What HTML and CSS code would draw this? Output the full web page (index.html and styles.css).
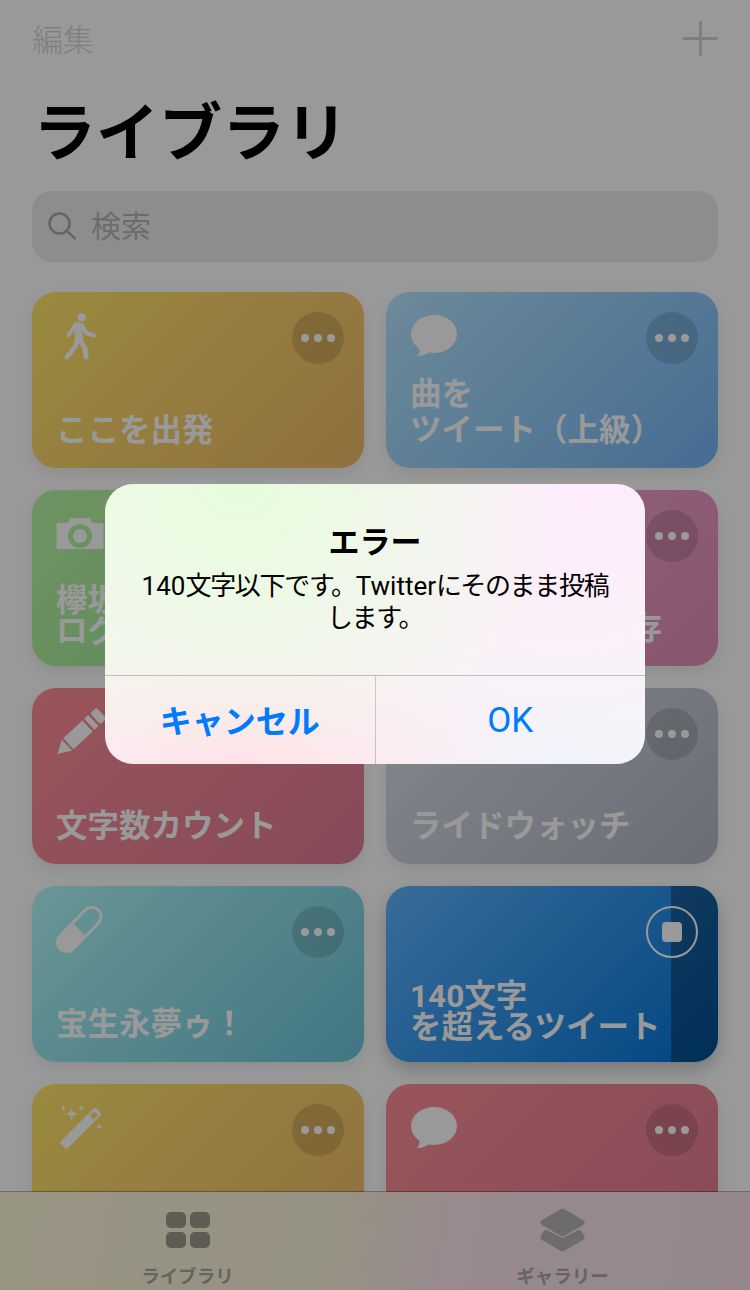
FILE: index.html
```html
<!DOCTYPE html>
<html lang="ja">
<head>
<meta charset="utf-8">
<title>ライブラリ</title>
<link rel="stylesheet" href="styles.css">
</head>
<body>
<div class="screen">
  <header class="topbar">
    <span class="edit">編集</span>
    <svg class="plus" viewBox="0 0 36 36"><path d="M18 0V36M0 18H36"/></svg>
  </header>
  <h1 class="title">ライブラリ</h1>
  <div class="search">
    <svg class="search-icon" viewBox="0 0 30 30"><circle cx="11.500" cy="11.500" r="10"/><path d="M18.800 18.800L27.500 27"/></svg>
    <span>検索</span>
  </div>
  <main class="grid">
    <article class="card yellow">
      <div class="card-top">
        <svg class="icon" viewBox="0 0 48 48"><circle class="f" cx="25.7" cy="5.3" r="4.2"/><path class="s" stroke-width="8" d="M22 14L23 26"/><path class="s" stroke-width="4" d="M20 12L12.5 23M26 13L30 21L38 23.5"/><path class="s" stroke-width="5" d="M21 29L19 35L11 45M24 28L29 36L30 45"/></svg>
        <span class="more"><i></i><i></i><i></i></span>
      </div>
      <p class="name">ここを出発</p>
    </article>
    <article class="card blue">
      <div class="card-top">
        <svg class="icon" viewBox="0 0 48 48"><ellipse class="f" cx="24" cy="22" rx="23" ry="19"/><path class="f" d="M10 33C10 38 9 42 7 44C12 44 17 42 21 39Z"/></svg>
        <span class="more"><i></i><i></i><i></i></span>
      </div>
      <p class="name">曲を<br>ツイート（上級）</p>
    </article>
    <article class="card green">
      <div class="card-top">
        <svg class="icon" viewBox="0 0 48 48"><path class="f" fill-rule="evenodd" d="M14 8H34L36 13H46Q47.5 13 47.5 14.500V37.500Q47.5 39 46 39H2Q.5 39 .5 37.500V14.500Q.5 13 2 13H12ZM24 14A12 12 0 1 0 24 38A12 12 0 1 0 24 14Z"/><circle class="f" cx="24" cy="26" r="7"/></svg>
        <span class="more"><i></i><i></i><i></i></span>
      </div>
      <p class="name tight">欅坂46<br>ログ</p>
    </article>
    <article class="card pink">
      <div class="card-top">
        <svg class="icon" viewBox="0 0 48 48"><ellipse class="f" cx="24" cy="22" rx="23" ry="19"/></svg>
        <span class="more"><i></i><i></i><i></i></span>
      </div>
      <p class="name">記事をメモに保存</p>
    </article>
    <article class="card red">
      <div class="card-top">
        <svg class="icon" viewBox="0 0 48 48"><g class="f" transform="translate(1.500 46) rotate(-43)"><path d="M0 0L13 -7.500V7.500Z"/><rect x="15" y="-7.500" width="26" height="15"/><rect x="43.500" y="-7.500" width="5.500" height="15"/><rect x="51.500" y="-7.500" width="8.500" height="15" rx="2"/></g></svg>
        <span class="more"><i></i><i></i><i></i></span>
      </div>
      <p class="name">文字数カウント</p>
    </article>
    <article class="card gray">
      <div class="card-top">
        <svg class="icon" viewBox="0 0 48 48"></svg>
        <span class="more"><i></i><i></i><i></i></span>
      </div>
      <p class="name">ライドウォッチ</p>
    </article>
    <article class="card teal">
      <div class="card-top">
        <svg class="icon" viewBox="0 0 48 48"><g transform="translate(23.200 23.500) rotate(-45.700)"><path class="f" d="M0 -10.700H-17.900A10.700 10.700 0 0 0 -17.900 10.700H0Z"/><path class="o" d="M0 -9.300H17.900A9.300 9.300 0 0 1 17.900 9.300H0"/></g></svg>
        <span class="more"><i></i><i></i><i></i></span>
      </div>
      <p class="name">宝生永夢ゥ！</p>
    </article>
    <article class="card deep">
      <span class="progress"></span>
      <div class="card-top">
        <svg class="icon" viewBox="0 0 48 48"></svg>
        <span class="stop"><b></b></span>
      </div>
      <p class="name tight">140文字<br>を超えるツイート</p>
    </article>
    <article class="card yellow">
      <div class="card-top">
        <svg class="icon" viewBox="0 0 48 48"><path class="f" fill-rule="evenodd" d="M37.500 4.500Q39 3.500 40.500 4.500L44.500 8.500Q45.500 10 44.500 11.500L12 44Q10.500 45 9 44L5 40Q4 38.500 5 37ZM38.500 7.500L34 12L37.500 15.500L42 11Z"/><path class="f" d="M15.700 2.500Q15.700 10 23.200 10Q15.700 10 15.700 17.500Q15.700 10 8.200 10Q15.700 10 15.700 2.500ZM7.300 .3Q7.300 4.300 11.300 4.300Q7.300 4.300 7.300 8.300Q7.300 4.300 3.300 4.300Q7.300 4.300 7.300 .3ZM25.300 .3Q25.300 4.300 29.300 4.300Q25.300 4.300 25.300 8.300Q25.300 4.300 21.300 4.300Q25.300 4.300 25.300 .3ZM43.300 18.700Q43.300 22.700 47.300 22.700Q43.300 22.700 43.300 26.700Q43.300 22.700 39.300 22.700Q43.300 22.700 43.300 18.700Z"/></svg>
        <span class="more"><i></i><i></i><i></i></span>
      </div>
    </article>
    <article class="card red">
      <div class="card-top">
        <svg class="icon" viewBox="0 0 48 48"><ellipse class="f" cx="24" cy="22" rx="23" ry="19"/><path class="f" d="M10 33C10 38 9 42 7 44C12 44 17 42 21 39Z"/></svg>
        <span class="more"><i></i><i></i><i></i></span>
      </div>
    </article>
  </main>
  <nav class="tabbar">
    <div class="tab">
      <span class="tab-grid"><i></i><i></i><i></i><i></i></span>
      <span class="tab-label">ライブラリ</span>
    </div>
    <div class="tab">
      <svg class="tab-layers" viewBox="0 0 45 44"><path d="M22.500 3.500L41.500 14.500L22.500 25.500L3.500 14.500Z"/><path d="M6 25L22.500 33.500L39 25L41.500 29.500L22.500 40.500L3.500 29.500Z"/></svg>
      <span class="tab-label">ギャラリー</span>
    </div>
  </nav>
  <div class="dim">
    <section class="alert">
      <div class="alert-body">
        <h2 class="alert-title">エラー</h2>
        <p class="alert-text"><span class="latin">140</span>文字以下です。<span class="latin">Twitter</span>にそのまま投稿します。</p>
      </div>
      <div class="alert-actions">
        <span class="action strong">キャンセル</span>
        <span class="action">OK</span>
      </div>
    </section>
  </div>
</div>
</body>
</html>
```
FILE: styles.css
```css
* { box-sizing: border-box; }
html, body { margin: 0; padding: 0; }
body {
  font-family: Roboto, "Noto Sans CJK JP", "Liberation Sans", sans-serif;
  background: #fff;
}
.screen {
  position: relative;
  width: 750px;
  height: 1290px;
  overflow: hidden;
  background: #fff;
  padding: 0 32px;
}
.topbar {
  height: 80px;
  display: flex;
  justify-content: space-between;
  align-items: flex-start;
}
.edit {
  margin-top: 18px;
  font-size: 31px;
  line-height: 46px;
  font-weight: 300;
  color: #d4d4d4;
}
.plus { width: 35px; height: 35px; margin-top: 21px; }
.plus path { stroke: #d4d4d4; stroke-width: 3; fill: none; }
.title {
  margin: 0 0 0 1px;
  height: 111px;
  font-size: 63px;
  line-height: 108px;
  font-weight: 700;
  color: #000;
}
.search {
  height: 71px;
  border-radius: 20px;
  background: #ececec;
  display: flex;
  align-items: center;
  padding-left: 16px;
  gap: 13px;
  font-size: 30px;
  color: #b4b4b4;
}
.search-icon { width: 30px; height: 30px; }
.search-icon circle, .search-icon path { fill: none; stroke: #a8a8a8; stroke-width: 2.500; }
.search span { margin-top: -6px; }
.grid {
  margin-top: 30px;
  display: grid;
  grid-template-columns: 332px 332px;
  grid-auto-rows: 176px;
  gap: 22px;
}
.card {
  position: relative;
  overflow: hidden;
  border-radius: 24px;
  padding: 20px 20px 19px 24px;
  display: flex;
  flex-direction: column;
  justify-content: space-between;
  box-shadow: 0 6px 16px rgba(0, 0, 0, .08);
}
.card-top { display: flex; justify-content: space-between; align-items: flex-start; position: relative; }
.icon { width: 48px; height: 48px; overflow: visible; }
.f { fill: #fff; }
.s { fill: none; stroke: #fff; stroke-linecap: round; stroke-linejoin: round; }
.o { fill: none; stroke: #fff; stroke-width: 2.800; }
.more {
  width: 52px;
  height: 52px;
  border-radius: 50%;
  background: rgba(0, 0, 0, .13);
  display: flex;
  align-items: center;
  justify-content: center;
  gap: 5px;
}
.more i { width: 8px; height: 8px; border-radius: 50%; background: #fff; }
.name {
  margin: 0;
  position: relative;
  font-size: 31.500px;
  line-height: 36px;
  font-weight: 700;
  color: #fff;
  white-space: nowrap;
}
.name.tight { line-height: 31px; }
.yellow { background: linear-gradient(135deg, #ffe669, #f0b969); }
.blue { background: linear-gradient(135deg, #b6e6ff, #74b6f5); }
.green { background: linear-gradient(135deg, #b9f7a7, #9be08f); }
.pink { background: linear-gradient(135deg, #f8a8d8, #e38eb8); }
.red { background: linear-gradient(135deg, #ff8e98, #e07c93); }
.gray { background: linear-gradient(135deg, #dbe0ea, #b2b7c5); }
.teal { background: linear-gradient(135deg, #b0fafa, #6cc5d9); }
.deep { background: linear-gradient(135deg, #61b4ff, #0075d9); box-shadow: 0 8px 18px rgba(0, 0, 0, .22); }
.progress {
  position: absolute;
  top: 0;
  right: 0;
  bottom: 0;
  width: 47px;
  background: rgba(0, 0, 0, .32);
}
.stop {
  width: 52px;
  height: 52px;
  border-radius: 50%;
  border: 2px solid #fff;
  display: flex;
  align-items: center;
  justify-content: center;
}
.stop b { width: 20px; height: 20px; border-radius: 4px; background: #fff; }
.tabbar {
  position: absolute;
  left: 0;
  right: 0;
  bottom: 0;
  height: 99px;
  display: flex;
  border-top: 1px solid rgba(0, 0, 0, .3);
  background: linear-gradient(100deg, #fdf7d9 0%, #fbf3da 45%, #fde6ec 60%, #f8e2ea 100%);
  background-clip: padding-box;
}
.tab {
  flex: 1;
  display: flex;
  flex-direction: column;
  align-items: center;
  padding-top: 16px;
  height: 100%;
}
.tab-grid {
  margin-top: 4px;
  width: 44px;
  height: 36px;
  display: grid;
  grid-template-columns: 20px 20px;
  grid-template-rows: 16px 16px;
  gap: 4px;
}
.tab-grid i { border-radius: 5px; background: #9e9a8d; }
.tab-layers { width: 45px; height: 44px; }
.tab-layers path { fill: #b8b3b3; stroke: #b8b3b3; stroke-width: 6; stroke-linejoin: round; }
.tab-label {
  position: absolute;
  bottom: 1px;
  font-size: 18.500px;
  line-height: 24px;
  font-weight: 700;
  color: #aaa7a0;
}
.dim {
  position: absolute;
  inset: 0;
  background: rgba(0, 0, 0, .4);
  display: flex;
  align-items: flex-start;
  justify-content: center;
  padding-top: 484px;
}
.alert {
  width: 540px;
  height: 280px;
  border-radius: 28px;
  overflow: hidden;
  display: flex;
  flex-direction: column;
  background:
    radial-gradient(ellipse 340px 280px at 25% 0%, #e6fcdc 0%, rgba(230, 252, 220, 0) 100%),
    radial-gradient(ellipse 340px 280px at 85% 5%, #feebfd 0%, rgba(254, 235, 253, 0) 100%),
    radial-gradient(ellipse 300px 140px at 25% 100%, #ffe2ea 0%, rgba(255, 226, 234, 0) 100%),
    radial-gradient(ellipse 300px 140px at 85% 100%, #f1f4fb 0%, rgba(241, 244, 251, 0) 100%),
    #f8f6f4;
}
.alert-body {
  height: 192px;
  padding: 39px 32px 0;
  text-align: center;
  border-bottom: 1px solid rgba(120, 90, 90, .35);
}
.alert-title {
  margin: 0;
  font-size: 31px;
  line-height: 40px;
  font-weight: 700;
  color: #000;
}
.alert-text {
  margin: 7px 0 0;
  font-size: 26px;
  line-height: 32px;
  letter-spacing: -1.300px;
  color: #000;
}
.latin { letter-spacing: 0; }
.alert-actions { flex: 1; display: flex; }
.action {
  flex: 1;
  display: flex;
  align-items: center;
  justify-content: center;
  font-size: 35px;
  color: #007aff;
}
.action.strong {
  font-size: 32px;
  font-weight: 700;
  padding-bottom: 3px;
  border-right: 1px solid rgba(120, 90, 90, .3);
}
```
